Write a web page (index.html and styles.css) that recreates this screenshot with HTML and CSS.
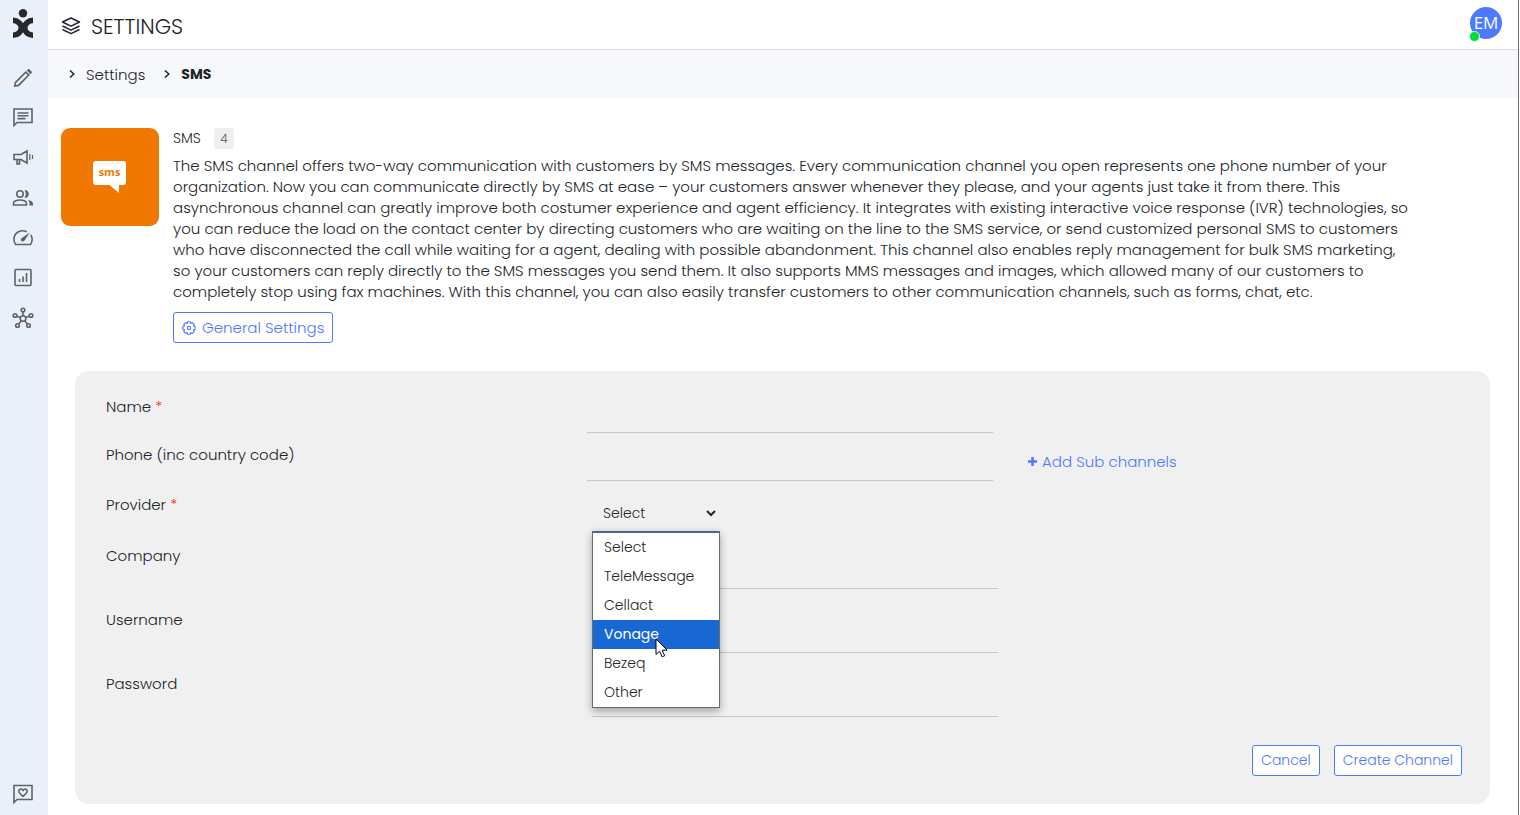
FILE: index.html
```html
<!DOCTYPE html>
<html lang="en">
<head>
<meta charset="utf-8">
<meta name="viewport" content="width=device-width, initial-scale=1">
<title>Settings - SMS</title>
<link rel="stylesheet" href="styles.css">
</head>
<body>
<div class="app">
  <nav class="sidebar" aria-label="Main">
    <a class="logo" href="#" aria-label="Home">
      <svg width="22" height="30" viewBox="0 0 22 30" fill="none" stroke="#26282c" stroke-width="5.6"><circle cx="11" cy="4.200" r="4.200" fill="#26282c" stroke="none"/><path d="M1 11.400C5.500 11.400 9.300 14.600 9.300 18.800S5.500 26.200 1 26.200M21 11.400C16.500 11.400 12.700 14.600 12.700 18.800S16.500 26.200 21 26.200"/></svg>
    </a>
    <a class="nav-item" href="#" aria-label="Edit"><svg viewBox="0 0 22 22"><path d="M2.800 19l.7-3.600L13.800 5.100l3 3L6.500 18.400z"/><path class="solid" d="M14.800 3.500l1-1c.6-.6 1.200-.6 1.800 0l1.900 1.900c.6.6.6 1.200 0 1.800l-1 1z"/></svg></a>
    <a class="nav-item" href="#" aria-label="Chats"><svg viewBox="0 0 22 22"><path d="M2 18.500V2h18v13.500H5zM5.500 6h11M5.500 8.800h11M5.500 11.600h8"/></svg></a>
    <a class="nav-item" href="#" aria-label="Campaigns"><svg viewBox="0 0 22 22"><path d="M2 7.500h7L15 4v12l-6-3.500H2zM5 12.500V17h2.500v-4.500"/><path class="thin" d="M17.800 7v6M20.500 8v4"/></svg></a>
    <a class="nav-item" href="#" aria-label="Contacts"><svg viewBox="0 0 22 22"><circle cx="8" cy="7" r="3.200"/><path d="M1.500 18v-1.800c0-2 3.500-3.200 6.500-3.200s6.500 1.200 6.500 3.200V18z"/><path class="solid" d="M12.500 3c3 0 4.300 2 4.300 4s-1.300 4-4.300 4c1.800-2.500 1.800-5.500 0-8zM15.800 13c3 .4 5.200 1.500 5.200 3.500V18.500h-3.500v-2c0-1.500-.6-2.600-1.700-3.500z"/></svg></a>
    <a class="nav-item" href="#" aria-label="Performance"><svg viewBox="0 0 22 22"><path d="M14.800 4.700C8.500 1.800 2 6 2 12.300c0 2 .6 3.800 1.600 5.200h14.800c2.200-3.200 2.100-6.800.4-9.600"/><path class="solid" d="M18 5.500l-5.500 8c-.9 1.200-2.300 1.200-3.100.4-.8-.9-.7-2.200.4-3z"/></svg></a>
    <a class="nav-item" href="#" aria-label="Reports"><svg viewBox="0 0 22 22"><rect x="3" y="2.500" width="16" height="16" rx="1"/><path d="M7.500 15v-3M11 15V9.500M14.500 15V6"/></svg></a>
    <a class="nav-item" href="#" aria-label="Integrations"><svg viewBox="0 0 22 22"><circle cx="11" cy="11.500" r="2.800"/><circle cx="11" cy="3" r="1.800"/><circle cx="3" cy="8.500" r="1.800"/><circle cx="19" cy="8.500" r="1.800"/><circle cx="5.500" cy="18.500" r="1.800"/><circle cx="16.500" cy="18.500" r="1.800"/><path d="M11 4.800v3.900M4.700 9.200l3.700 1.400M17.300 9.200l-3.700 1.400M6.700 17l2.600-3.200M15.300 17l-2.600-3.200"/></svg></a>
    <a class="nav-item nav-last" href="#" aria-label="Feedback"><svg viewBox="0 0 22 22"><path d="M2 19.500V2.500h18v14H5z"/><path d="M11 13.300C8 11 6.800 9.800 6.800 8.100c0-2.200 3-2.900 4.200-.7 1.200-2.200 4.200-1.500 4.200.7 0 1.700-1.200 2.900-4.200 5.200z"/></svg></a>
  </nav>

  <div class="page">
    <header class="topbar">
      <svg class="layers" width="20" height="18" viewBox="0 0 20 18"><path d="M10 1l8.500 4L10 9.200 1.500 5zM1.500 9l8.500 4.200L18.500 9M1.500 12.500L10 16.700l8.500-4.200"/></svg>
      <h1 class="title">SETTINGS</h1>
      <button class="avatar" type="button">EM<span class="status"></span></button>
    </header>

    <nav class="breadcrumbs" aria-label="Breadcrumb">
      <svg class="crumb-arrow" viewBox="0 0 6 8"><path d="M1 .5L4.800 4 1 7.500"/></svg>
      <a class="crumb" href="#">Settings</a>
      <svg class="crumb-arrow" viewBox="0 0 6 8"><path d="M1 .5L4.800 4 1 7.500"/></svg>
      <strong>SMS</strong>
    </nav>

    <main class="content">
      <section class="intro">
        <div class="channel-icon">
          <svg width="34" height="34" viewBox="0 0 34 34"><path fill="#fff" d="M3 1h27a3 3 0 0 1 3 3v18a3 3 0 0 1-3 3h-4v8l-9.500-8H3a3 3 0 0 1-3-3V4a3 3 0 0 1 3-3z"/><text x="16.500" y="16" text-anchor="middle">sms</text></svg>
        </div>
        <div class="intro-body">
          <div class="channel-head"><h2 class="channel-name">SMS</h2><span class="count">4</span></div>
          <p class="description">The SMS channel offers two-way communication with customers by SMS messages. Every communication channel you open represents one phone number of your<br>organization. Now you can communicate directly by SMS at ease – your customers answer whenever they please, and your agents just take it from there. This<br>asynchronous channel can greatly improve both costumer experience and agent efficiency. It integrates with existing interactive voice response (IVR) technologies, so<br>you can reduce the load on the contact center by directing customers who are waiting on the line to the SMS service, or send customized personal SMS to customers<br>who have disconnected the call while waiting for a agent, dealing with possible abandonment. This channel also enables reply management for bulk SMS marketing,<br>so your customers can reply directly to the SMS messages you send them. It also supports MMS messages and images, which allowed many of our customers to<br>completely stop using fax machines. With this channel, you can also easily transfer customers to other communication channels, such as forms, chat, etc.</p>
          <button class="btn" type="button"><svg width="14" height="14" viewBox="0 0 14 14"><path d="M5.700.8h2.600l.5 1.600 1.500-.8 1.900 1.900-.8 1.500 1.700.5v2.900l-1.700.5.8 1.600-1.900 1.900-1.500-.8-.5 1.700H5.700l-.5-1.700-1.500.8-1.900-1.900.8-1.600-1.700-.5V5.500L2.600 5l-.8-1.500 1.900-1.900 1.500.8z"/><circle cx="7" cy="7" r="1.700"/></svg>General Settings</button>
        </div>
      </section>

      <form class="card">
        <div class="row">
          <label for="name">Name <span class="required">*</span></label>
          <input class="field" id="name" type="text">
        </div>
        <div class="row">
          <label for="phone">Phone (inc country code)</label>
          <input class="field" id="phone" type="tel">
          <button class="add-link" type="button"><svg width="9" height="9" viewBox="0 0 9 9"><path d="M4.500 0v9M0 4.500h9"/></svg>Add Sub channels</button>
        </div>
        <div class="row row-provider">
          <label for="provider">Provider <span class="required">*</span></label>
          <div class="select-wrap">
            <select class="select" id="provider"><option>Select</option></select>
            <svg class="caret" width="10" height="7" viewBox="0 0 10 7"><path d="M1 1l4 4 4-4"/></svg>
            <ul class="menu">
              <li>Select</li>
              <li>TeleMessage</li>
              <li>Cellact</li>
              <li class="active">Vonage<svg class="cursor" width="13" height="20" viewBox="0 0 13 20"><path d="M1 1v15.500l3.600-3.300 2.600 5.600 2.500-1.100-2.500-5.500h5z"/></svg></li>
              <li>Bezeq</li>
              <li>Other</li>
            </ul>
          </div>
        </div>
        <div class="row row-tall">
          <label for="company">Company</label>
          <input class="field" id="company" type="text">
        </div>
        <div class="row row-tall">
          <label for="username">Username</label>
          <input class="field" id="username" type="text">
        </div>
        <div class="row row-tall">
          <label for="password">Password</label>
          <input class="field" id="password" type="password">
        </div>
        <div class="actions">
          <button class="btn" type="button">Cancel</button>
          <button class="btn" type="submit">Create Channel</button>
        </div>
      </form>
    </main>
  </div>
</div>
</body>
</html>
```
FILE: styles.css
```css
* { box-sizing: border-box; }

body {
  margin: 0;
  background: #fff;
  color: #212529;
  font: 300 15px/21px Poppins, Inter, "Liberation Sans", sans-serif;
}

button, input, select { font: inherit; color: inherit; }
a { color: inherit; text-decoration: none; }
svg { display: block; }

.app { display: flex; min-height: 100vh; }

.sidebar {
  display: flex;
  flex-direction: column;
  align-items: center;
  flex: 0 0 48px;
  padding: 9px 2px 10px 0;
  background: #e9f0fa;
}
.logo { margin-bottom: 28px; }
.nav-item { height: 22px; margin-bottom: 18px; }
.nav-item svg {
  width: 22px;
  height: 22px;
  fill: none;
  stroke: #5f6368;
  stroke-width: 1.6;
}
.nav-item .solid { fill: #5f6368; stroke: none; }
.nav-item .thin { stroke-width: 1.2; }
.nav-last { margin: auto 0 0; }

.page {
  flex: 1;
  min-width: 0;
  margin-right: 1px;
  border-right: 1px solid #707070;
}

.topbar {
  display: flex;
  align-items: center;
  height: 50px;
  padding: 0 16px 0 13px;
  border-bottom: 1px solid #dcdcdc;
}
.layers { margin-top: 3px; fill: none; stroke: #212529; stroke-width: 1.5; stroke-linejoin: round; }
.title { margin: 4px 0 0 10px; font-size: 21px; font-weight: 300; line-height: 28px; }
.avatar {
  position: relative;
  width: 32px;
  height: 32px;
  margin: 0 0 4px auto;
  padding: 0;
  border: 0;
  border-radius: 50%;
  background: #4d79ff;
  color: #fff;
  font: 400 17px/32px "Open Sans", sans-serif;
}
.status {
  position: absolute;
  left: -1px;
  bottom: -3px;
  width: 11px;
  height: 11px;
  border: 1px solid #d9fbe0;
  border-radius: 50%;
  background: #00dd3b;
}

.breadcrumbs {
  display: flex;
  align-items: center;
  height: 48px;
  padding: 0 21px;
  background: #f6f8fc;
}
.crumb-arrow { width: 6px; height: 8px; fill: none; stroke: #212529; stroke-width: 1.5; }
.crumb { margin: 0 19px 0 11px; }
.breadcrumbs strong { margin-left: 11px; font-weight: 700; font-size: 14px; }

.content { padding: 30px 28px 11px 13px; }

.intro { display: flex; gap: 14px; }
.channel-icon {
  display: flex;
  align-items: center;
  justify-content: center;
  flex: 0 0 98px;
  height: 98px;
  border-radius: 9px;
  background: #f07800;
}
.channel-icon text { font: 700 11px "Open Sans", sans-serif; fill: #f07800; }
.channel-head { display: flex; align-items: center; gap: 13px; height: 21px; }
.channel-name { margin: 0; font-size: 14px; font-weight: 300; }
.count {
  width: 20px;
  border-radius: 3px;
  background: #efefef;
  color: #555;
  font-size: 12px;
  text-align: center;
}
.description { margin: 6px 0 10px; }

.btn {
  display: inline-flex;
  align-items: center;
  gap: 6px;
  height: 31px;
  padding: 0 8px;
  border: 1px solid #4d79ff;
  border-radius: 3px;
  background: #fff;
  color: #4d79ff;
}
.btn svg { fill: none; stroke: #4d79ff; stroke-width: 1.1; stroke-linejoin: round; }

.card {
  margin: 28px 0 0 14px;
  padding: 20px 28px 28px 31px;
  border-radius: 14px;
  background: #f0f0f0;
}
.row {
  display: grid;
  grid-template-columns: 481fr 406fr 469fr;
  align-items: start;
  min-height: 48px;
}
.row label { line-height: 32px; }
.required { color: #f22; }
.field {
  width: 100%;
  height: 42px;
  padding: 0 10px;
  border: 0;
  border-bottom: 1px solid #c8c8c8;
  border-radius: 0;
  background: transparent;
  outline: 0;
}
.row-provider { height: 51px; margin: 2px 0 0; }
.row-tall { min-height: 64px; }
.row-tall .field { height: 49px; margin-left: 5px; }

.add-link {
  display: flex;
  align-items: center;
  gap: 5px;
  justify-self: start;
  margin-left: 35px;
  padding: 12px 0;
  border: 0;
  background: none;
  color: #4d79ff;
}
.add-link svg { stroke: #4d79ff; stroke-width: 2.500; }

.select-wrap {
  position: relative;
  display: flex;
  align-items: center;
  width: 128px;
  height: 48px;
  margin-left: 5px;
}
.select {
  appearance: none;
  width: 100%;
  height: 36px;
  padding: 0 24px 0 11px;
  border: 0;
  background: transparent;
  font-size: 14px;
}
.caret {
  position: absolute;
  right: 4px;
  fill: none;
  stroke: #212529;
  stroke-width: 2;
  pointer-events: none;
}
.menu {
  position: absolute;
  top: 42px;
  left: 0;
  z-index: 1;
  width: 100%;
  margin: 0;
  padding: 0;
  border: 1px solid #6b6b6b;
  border-top: 2px solid #53638f;
  background: #fff;
  box-shadow: 0 3px 8px rgba(0, 0, 0, .35);
  list-style: none;
  font-size: 14px;
  line-height: 29px;
}
.menu li { position: relative; padding-left: 11px; }
.menu .active { background: #1967d2; color: #fff; font-weight: 400; }
.cursor { position: absolute; left: 62px; top: 18px; z-index: 2; fill: #fff; stroke: #000; stroke-width: 1; }

.actions { display: flex; justify-content: flex-end; gap: 14px; margin-top: 13px; font-size: 14px; }
```
